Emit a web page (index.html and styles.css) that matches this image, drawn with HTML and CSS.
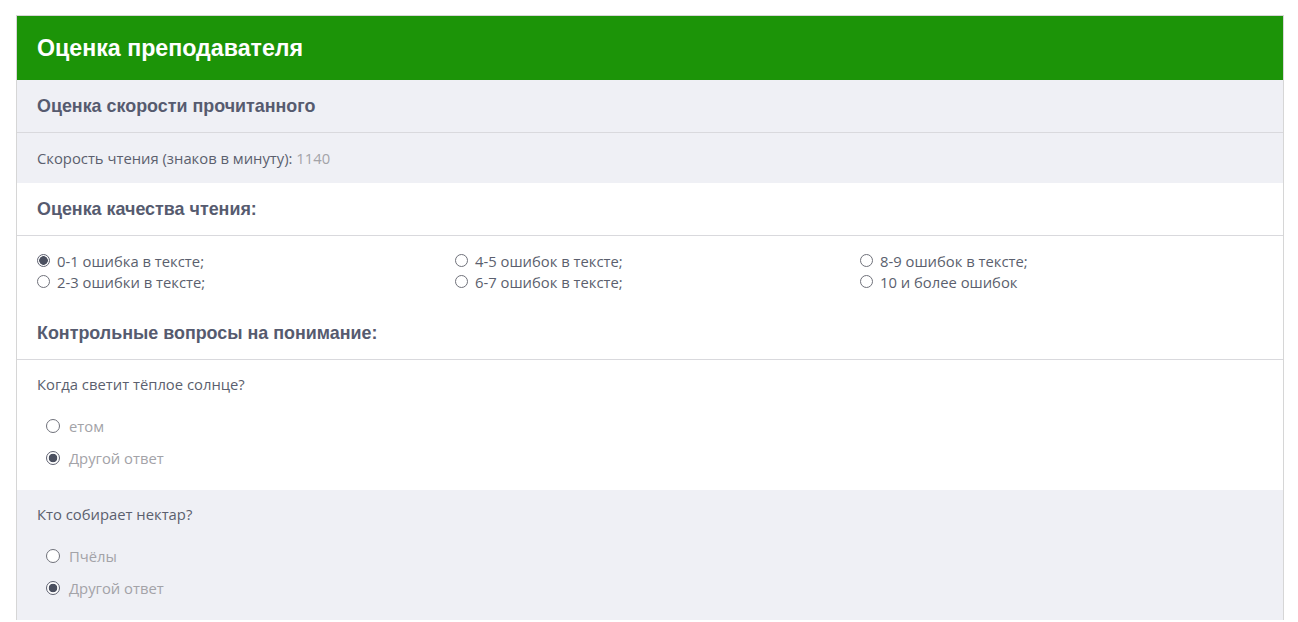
FILE: index.html
```html
<!DOCTYPE html>
<html lang="ru">
<head>
<meta charset="utf-8">
<title>Оценка преподавателя</title>
<link rel="stylesheet" href="styles.css">
</head>
<body>
<div class="card">
  <div class="card-header">Оценка преподавателя</div>

  <div class="section-title grey">Оценка скорости прочитанного</div>
  <div class="speed-row grey">Скорость чтения (знаков в минуту): <span class="muted">1140</span></div>

  <div class="section-title">Оценка качества чтения:</div>
  <div class="quality-grid">
    <label class="opt"><span class="radio checked"></span>0-1 ошибка в тексте;</label>
    <label class="opt"><span class="radio"></span>4-5 ошибок в тексте;</label>
    <label class="opt"><span class="radio"></span>8-9 ошибок в тексте;</label>
    <label class="opt"><span class="radio"></span>2-3 ошибки в тексте;</label>
    <label class="opt"><span class="radio"></span>6-7 ошибок в тексте;</label>
    <label class="opt"><span class="radio"></span>10 и более ошибок</label>
  </div>

  <div class="section-title">Контрольные вопросы на понимание:</div>

  <div class="question">
    <div class="q-text">Когда светит тёплое солнце?</div>
    <div class="answers">
      <div class="answer"><span class="radio"></span>етом</div>
      <div class="answer"><span class="radio checked"></span>Другой ответ</div>
    </div>
  </div>
  <div class="question grey">
    <div class="q-text">Кто собирает нектар?</div>
    <div class="answers">
      <div class="answer"><span class="radio"></span>Пчёлы</div>
      <div class="answer"><span class="radio checked"></span>Другой ответ</div>
    </div>
  </div>
</div>
</body>
</html>
```

FILE: styles.css
```css
html, body {
  margin: 0;
  padding: 0;
  background: #ffffff;
}
body {
  font-family: "Open Sans", "Liberation Sans", sans-serif;
  color: #5b5f6e;
  font-size: 14.8px;
}
.card {
  margin: 15px 14px 0 16px;
  border: 1px solid #d6d6d6;
  border-bottom: none;
}
.card-header {
  background: #1c9408;
  color: #ffffff;
  height: 64px;
  display: flex;
  align-items: center;
  padding: 0 20px;
  font-family: "Liberation Sans", Arial, sans-serif;
  font-weight: 700;
  font-size: 23.2px;
}
.grey {
  background: #eff0f5;
}
.section-title {
  height: 52px;
  display: flex;
  align-items: center;
  padding: 0 20px;
  border-bottom: 1px solid #d9d9dd;
  font-family: "Liberation Sans", Arial, sans-serif;
  font-weight: 700;
  font-size: 17.9px;
  color: #565b6f;
}
.speed-row {
  height: 50px;
  display: flex;
  align-items: center;
  padding: 0 20px;
  white-space: pre;
}
.muted {
  color: #a3a3a8;
}
.quality-grid {
  display: grid;
  grid-template-columns: 418px 405px 1fr;
  padding: 14px 20px 15px;
}
.opt {
  display: flex;
  align-items: center;
  height: 21px;
}
.opt .radio {
  margin-right: 7px;
  width: 13px;
  height: 13px;
}
.radio {
  display: inline-block;
  box-sizing: border-box;
  width: 14px;
  height: 14px;
  border-radius: 50%;
  border: 1px solid #6f717a;
  background: #ffffff;
  flex: none;
}
.radio.checked {
  background: radial-gradient(circle, #4b5060 0 4px, #ffffff 4.6px);
  border-color: #5e6170;
}
.question {
  padding: 14px 20px 16px;
}
.q-text {
  line-height: 20px;
}
.answers {
  margin-top: 16px;
  padding-left: 9px;
}
.answer {
  display: flex;
  align-items: center;
  height: 32px;
  color: #a3a3a8;
}
.answer .radio {
  margin-right: 9px;
}
```
